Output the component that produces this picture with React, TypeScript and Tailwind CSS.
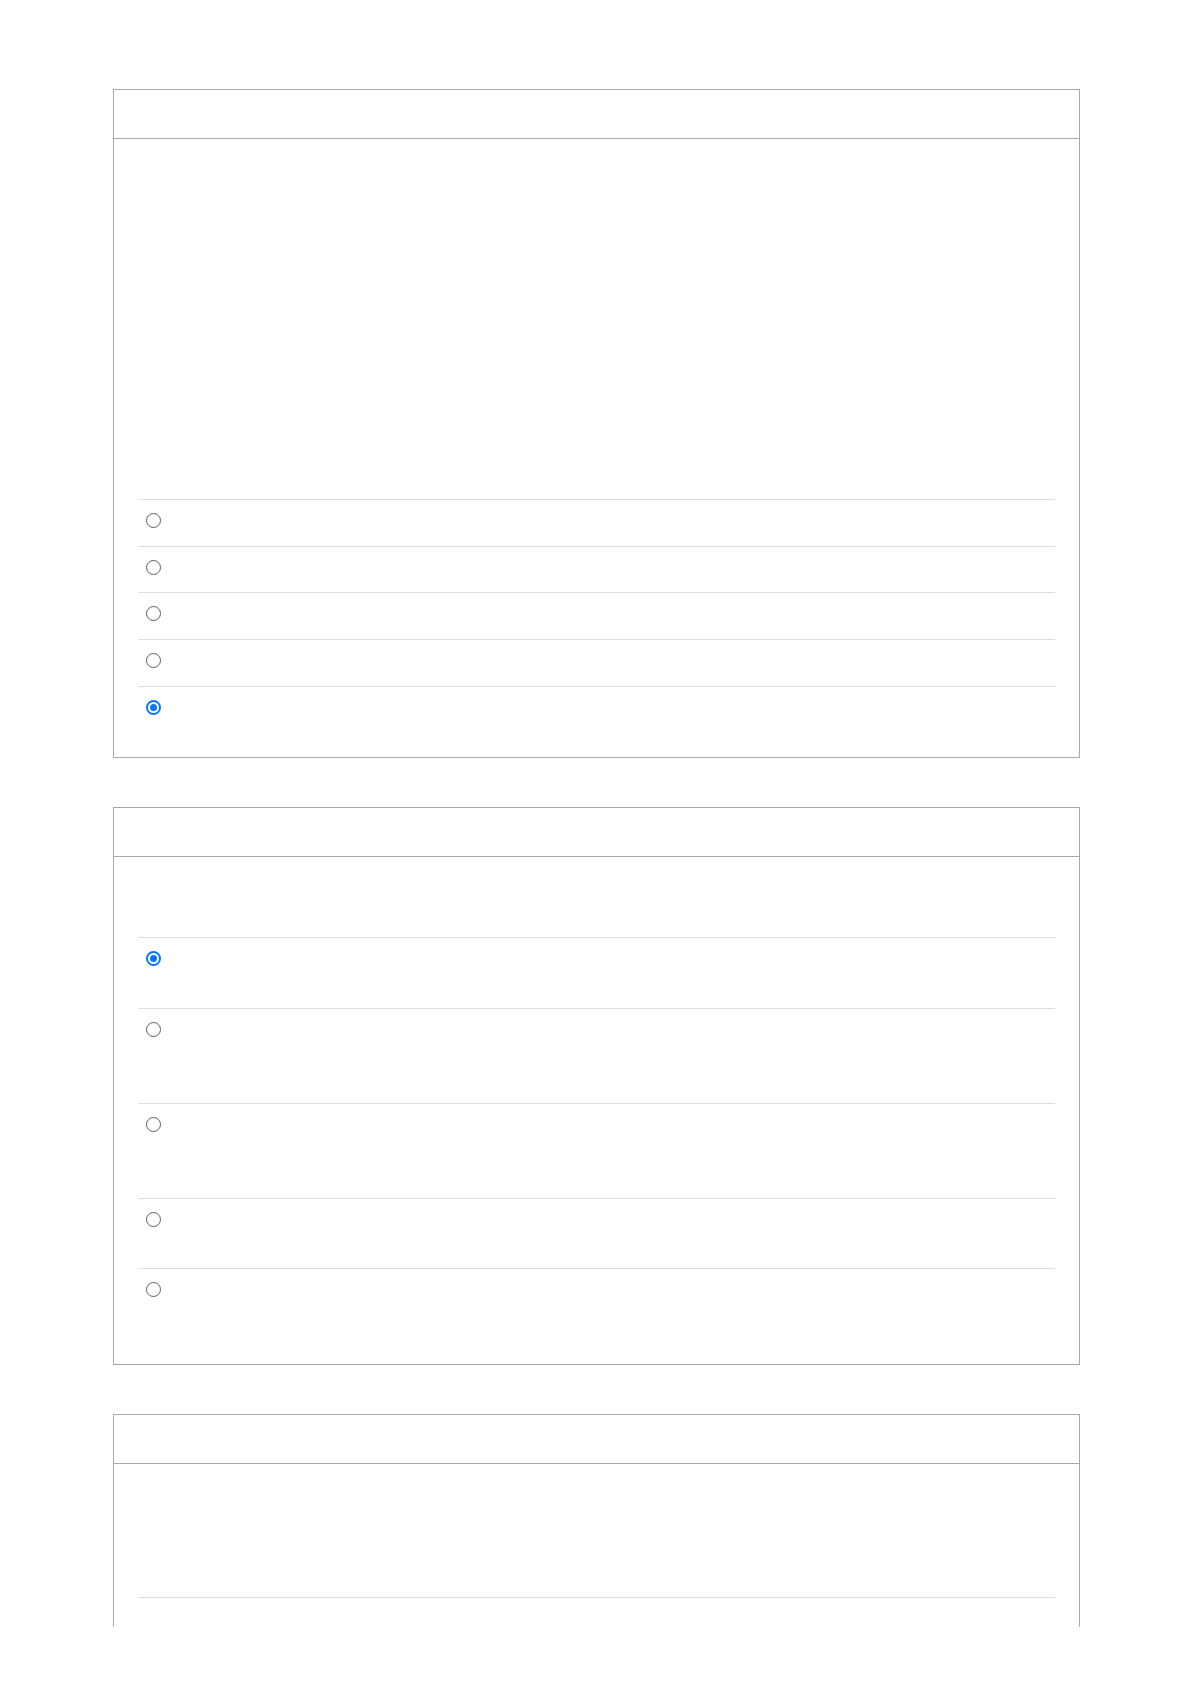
import type { ReactNode } from 'react';

interface Option {
  id: string;
  height: string;
  checked?: boolean;
}

const CARD_ONE: Option[] = [
  { id: 'a1', height: 'h-[47px]' },
  { id: 'a2', height: 'h-[46px]' },
  { id: 'a3', height: 'h-[47px]' },
  { id: 'a4', height: 'h-[47px]' },
  { id: 'a5', height: 'h-[47px]', checked: true },
];

const CARD_TWO: Option[] = [
  { id: 'b1', height: 'h-[71px]', checked: true },
  { id: 'b2', height: 'h-[95px]' },
  { id: 'b3', height: 'h-[95px]' },
  { id: 'b4', height: 'h-[70px]' },
  { id: 'b5', height: 'h-[72px]' },
];

function Radio({ checked }: { checked?: boolean }) {
  if (checked) {
    return (
      <span className="flex h-[15px] w-[15px] items-center justify-center rounded-full border-2 border-[#0b75f7]">
        <span className="h-[7px] w-[7px] rounded-full bg-[#0b75f7]" />
      </span>
    );
  }
  return <span className="block h-[15px] w-[15px] rounded-full border-[1.5px] border-[#5f5f5f]" />;
}

function OptionRow({ option }: { option: Option }) {
  return (
    <div
      role="radio"
      aria-checked={!!option.checked}
      className={`flex items-start border-t border-[#dedede] pl-2 pt-[13px] ${option.height}`}
    >
      <Radio checked={option.checked} />
    </div>
  );
}

function Card({ children, open }: { children: ReactNode; open?: boolean }) {
  return (
    <section className={`border border-[#a8a8a8] bg-white ${open ? 'border-b-0' : ''}`}>
      <header className="h-[49px] border-b border-[#a8a8a8]" />
      <div className="px-6 pt-6 pb-6">{children}</div>
    </section>
  );
}

export default function App() {
  return (
    <div className="h-[1686px] bg-white" style={{ fontFamily: '"Liberation Sans", Arial, sans-serif' }}>
      <div className="ml-[113px] flex h-[1627px] w-[967px] flex-col gap-[49px] overflow-hidden pt-[89px]">
        <Card>
          <div className="h-[336px]" />
          <div role="radiogroup">
            {CARD_ONE.map((o) => (
              <OptionRow key={o.id} option={o} />
            ))}
          </div>
        </Card>

        <Card>
          <div className="h-[56px]" />
          <div role="radiogroup">
            {CARD_TWO.map((o) => (
              <OptionRow key={o.id} option={o} />
            ))}
          </div>
        </Card>

        <Card open>
          <div className="h-[109px]" />
          <div className="h-[71px] border-t border-[#dedede]" />
        </Card>
      </div>
    </div>
  );
}
